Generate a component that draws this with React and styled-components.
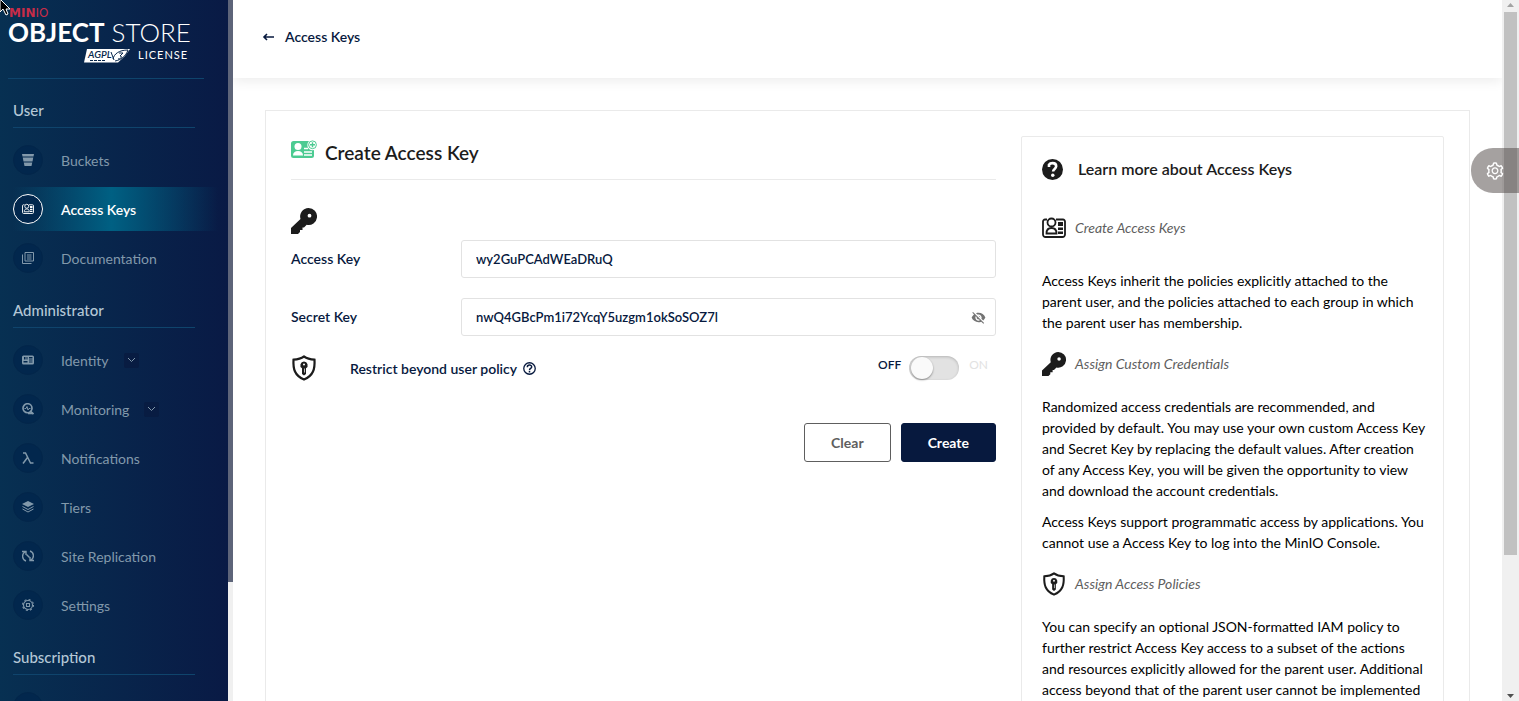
import React, { useState } from "react"
import styled, { createGlobalStyle, css } from "styled-components"
import { AiOutlineSetting } from "react-icons/ai"
import { MdVisibilityOff } from "react-icons/md"

const GlobalStyle = createGlobalStyle`
  * {
    box-sizing: border-box;
  }
  body {
    margin: 0;
    background: #fff;
    color: #07193e;
    font-family: Lato, "Open Sans", sans-serif;
    font-size: 14px;
  }
  button, input {
    font-family: inherit;
    font-size: 14px;
  }
  svg {
    display: block;
    flex: none;
  }
`

const Layout = styled.div`
  display: flex;
  height: 100vh;
  overflow: hidden;
`

/* ---------- sidebar ---------- */

const Sidebar = styled.aside`
  display: flex;
  flex: none;
  width: 233px;
`

const SidebarBody = styled.div`
  flex: 1;
  overflow: hidden;
  background: linear-gradient(90deg, #073052 0%, #091a45 100%);
`

const SidebarTrack = styled.div`
  width: 5px;
  background: #f0f0f0;
`

const SidebarThumb = styled.div`
  height: 83%;
  background: #5d6479;
`

const LogoBox = styled.div`
  height: 79px;
  margin: 0 24px 1px 8px;
  border-bottom: 1px solid #0f446c;
`

const SectionTitle = styled.h2`
  margin: 0 33px 10px 13px;
  padding: 20px 0 6px;
  border-bottom: 1px solid #0f446c;
  color: #b4c7d6;
  font-size: 15px;
  font-weight: 500;
  line-height: 21px;
`

const Menu = styled.ul`
  display: grid;
  gap: 5px;
  margin: 0;
  padding: 0 10px 0 13px;
  list-style: none;
`

const MenuLink = styled.a`
  display: flex;
  align-items: center;
  gap: 18px;
  height: 44px;
  color: #8299ab;
  text-decoration: none;
  ${props =>
    props.$active &&
    css`
      color: #fff;
      font-weight: 600;
      background: linear-gradient(90deg, transparent 0%, #006083 48%, transparent 100%);
    `}
`

const MenuIcon = styled.span`
  display: flex;
  align-items: center;
  justify-content: center;
  width: 30px;
  height: 30px;
  border: 1px solid ${props => (props.$active ? "#fff" : "#03264a")};
  border-radius: 50%;
  background: #02274d;
`

const MenuCaret = styled.span`
  display: flex;
  align-items: center;
  justify-content: center;
  width: 15px;
  height: 15px;
  margin-left: -3px;
  border-radius: 2px;
  background: #081c42;
`

/* ---------- page ---------- */

const Main = styled.main`
  flex: 1;
  min-width: 0;
  overflow: hidden;
`

const PageHeader = styled.header`
  display: flex;
  align-items: center;
  height: 78px;
  padding: 0 29px 5px;
  box-shadow: 0 3px 12px rgba(0, 0, 0, 0.08);
`

const BackLink = styled.a`
  display: flex;
  align-items: center;
  gap: 10px;
  color: #07193e;
  font-weight: 600;
  text-decoration: none;
`

const Card = styled.section`
  display: grid;
  grid-template-columns: 5fr 3fr;
  align-items: start;
  gap: 25px;
  margin: 32px;
  padding: 25px;
  border: 1px solid #eaeaea;
`

const KeyForm = styled.form`
  min-width: 0;
`

const FormTitle = styled.h1`
  display: flex;
  gap: 8px;
  height: 44px;
  margin: 0 0 28px;
  padding-top: 4px;
  border-bottom: 1px solid #eaeaea;
  color: #1c1c1c;
  font-size: 19px;
  font-weight: 600;
  line-height: 25px;
`

const Fields = styled.div`
  display: grid;
  gap: 20px;
  margin-top: 6px;
`

const Field = styled.div`
  display: flex;
  align-items: center;
`

const FieldLabel = styled.label`
  flex: none;
  width: 170px;
  padding-bottom: 2px;
  font-weight: 600;
`

const InputWrap = styled.div`
  display: flex;
  align-items: center;
  flex: 1;
  height: 38px;
  padding: 0 9px 0 14px;
  border: 1px solid #e2e2e2;
  border-radius: 3px;
`

const TextInput = styled.input`
  flex: 1;
  min-width: 0;
  padding: 0 0 1px;
  border: none;
  outline: none;
  background: none;
  color: #07193e;
  font-size: 13px;
  font-weight: 600;
`

const EyeButton = styled.button`
  padding: 0;
  border: none;
  background: none;
  color: #737373;
`

const SwitchRow = styled.div`
  display: flex;
  align-items: center;
  height: 26px;
  margin-top: 19px;
  padding-right: 8px;
`

const SwitchLabel = styled.label`
  display: flex;
  align-items: center;
  gap: 6px;
  margin: 0 auto 0 33px;
  font-weight: 600;
`

const SwitchState = styled.span`
  padding-bottom: 7px;
  color: ${props => (props.$on ? "#07193e" : "#e2e2e2")};
  font-size: 12px;
  font-weight: ${props => (props.$on ? 600 : 400)};
`

const Switch = styled.input`
  appearance: none;
  width: 50px;
  height: 24px;
  margin: 0 10px 0 8px;
  padding: 1px;
  border-radius: 12px;
  background: #e2e2e2;
  box-shadow: inset 0 1px 3px rgba(0, 0, 0, 0.2);

  &::before {
    content: "";
    display: block;
    width: 22px;
    height: 22px;
    margin-left: ${props => (props.checked ? 26 : 1)}px;
    border-radius: 50%;
    background: #fafafa;
    box-shadow: 0 1px 2px rgba(0, 0, 0, 0.4);
  }
`

const Actions = styled.div`
  display: flex;
  justify-content: flex-end;
  gap: 10px;
  margin-top: 42px;
`

const Button = styled.button`
  height: 39px;
  padding: 0 26px;
  border: 1px solid ${props => (props.$primary ? "#07193e" : "#5e5e5e")};
  border-radius: 3px;
  background: ${props => (props.$primary ? "#07193e" : "#fff")};
  color: ${props => (props.$primary ? "#fff" : "#5e5e5e")};
  font-weight: 700;
`

/* ---------- help box ---------- */

const HelpBox = styled.aside`
  min-width: 0;
  padding: 20px 14px 20px 20px;
  border: 1px solid #eaeaea;
  border-radius: 2px;
`

const HelpTitle = styled.h2`
  display: flex;
  gap: 15px;
  height: 24px;
  margin: 0 0 35px;
  padding-top: 2px;
  color: #1c1c1c;
  font-size: 16px;
  font-weight: 600;
  line-height: 20px;
`

const HelpHeading = styled.h3`
  display: flex;
  gap: 9px;
  height: 24px;
  margin: 19px 0 ${props => (props.$wide ? 30 : 20)}px;
  color: #5e5e5e;
  font-size: 14px;
  font-style: italic;
  font-weight: 400;
  line-height: 23px;
`

const HelpText = styled.p`
  margin: 0 0 10px;
  color: #000;
  font-size: 14px;
  line-height: 21px;
`

/* ---------- window furniture ---------- */

const ScrollBar = styled.div`
  display: flex;
  flex-direction: column;
  align-items: center;
  flex: none;
  width: 17px;
  padding: 3px 0 2px;
  background: #f0f0f0;
`

const ScrollThumb = styled.div`
  width: 13px;
  height: 78%;
  margin: 4px 0 auto;
  background: #c1c1c1;
`

const SettingsTab = styled.button`
  position: fixed;
  top: 148px;
  right: 0;
  display: flex;
  align-items: center;
  width: 48px;
  height: 45px;
  padding: 0 0 0 14px;
  border: none;
  border-radius: 22px 0 0 22px;
  background: rgba(83, 75, 73, 0.52);
  color: #fff;
`

const Pointer = styled.svg`
  position: fixed;
  top: 0;
  left: 0;
`

/* ---------- drawings ---------- */

const Logo = () => (
  <svg width="196" height="70" role="img" aria-label="MinIO Object Store, AGPLv3 license">
    <text x="1" y="17" fill="#c72c48" fontFamily="DejaVu Sans" fontSize="12">
      <tspan fontWeight="700">MIN</tspan>
      <tspan>IO</tspan>
    </text>
    <text x="0" y="42" fill="#fff" fontSize="26">
      <tspan fontWeight="700">OBJECT</tspan>
      <tspan fontWeight="300"> STORE</tspan>
    </text>
    <path d="M79 49h43l-5 7-7 6.500H76z" fill="#fff" />
    <text x="80" y="58" fill="#07264b" fontSize="10" fontStyle="italic" fontWeight="600">
      AGPL
    </text>
    <path d="M105 59c1-5 6-9 15-9-2 6-7 10-13 11M103 52l3 8" fill="none" stroke="#07264b" />
    <path d="M111 53h4l-3 3c3 0 1 3-2 3" fill="none" stroke="#07264b" />
    <path d="M82 60.500h16" stroke="#07264b" strokeDasharray="3 1" />
    <text x="130" y="59" fill="#fff" fontSize="11" letterSpacing="1">
      LICENSE
    </text>
  </svg>
)

const Icon = ({ size = 12, box = 24, children, ...rest }) => (
  <svg width={size} height={size} viewBox={`0 0 ${box} ${box}`} fill="currentColor" aria-hidden="true" {...rest}>
    {children}
  </svg>
)

const BucketsIcon = () => (
  <Icon>
    <path d="M0 0h24l-1 5H1zM1.500 7h21l-1.500 8H3zM3.500 17h17L19 24H5z" />
  </Icon>
)

const AccessKeysIcon = ({ size, color }) => (
  <Icon size={size} color={color}>
    <g fill="none" stroke="currentColor" strokeWidth="1.800">
      <path d="M5 3.500H3A2 2 0 0 0 1 5.500v13a2.500 2.500 0 0 0 2.500 2.500h17a2.500 2.500 0 0 0 2.500-2.500v-13a2 2 0 0 0-2-2h-7" />
      <circle cx="9.500" cy="6.500" r="4" />
      <path d="M4.500 17.500c0-4 2-5.500 5-5.500s5 1.500 5 5.500z" />
    </g>
    <path d="M16 6h5v4h-5zM16 11.500h5v2.500h-5zM16 15.500h5v2.500h-5z" />
  </Icon>
)

const DocumentationIcon = () => (
  <Icon fill="none" stroke="currentColor" strokeWidth="2">
    <path d="M6 1h17v17H6zM1 5v18h18M10 6h9M10 10h9M10 14h9" />
  </Icon>
)

const IdentityIcon = () => (
  <Icon>
    <path
      fillRule="evenodd"
      d="M3 3h18a3 3 0 0 1 3 3v12a3 3 0 0 1-3 3H3a3 3 0 0 1-3-3V6a3 3 0 0 1 3-3zm1 3v5h3V6zm5 0v5h2V6zM3 14v3h8v-3zM14 6v3h7V6zm0 5v2h7v-2zm0 4v2h7v-2z"
    />
  </Icon>
)

const MonitoringIcon = () => (
  <Icon fill="none" stroke="currentColor" strokeWidth="3.400">
    <circle cx="11" cy="10.500" r="9" />
    <path d="M16 16l7 6M12 21h11" />
    <path d="M5 11h3l2-4 2 7 2-3h3" strokeWidth="2" />
  </Icon>
)

const LambdaIcon = () => (
  <Icon fill="none" stroke="currentColor" strokeWidth="3">
    <path d="M2 2h5l10 20h6M11 11L2 23" />
  </Icon>
)

const TiersIcon = () => (
  <Icon>
    <path d="M12 0l12 6-12 6L0 6z" />
    <path d="M1 11l11 6 11-6M1 16l11 6 11-6" fill="none" stroke="currentColor" strokeWidth="2" />
  </Icon>
)

const ReplicationIcon = () => (
  <Icon fill="none" stroke="currentColor" strokeWidth="2.800">
    <path d="M8 22A10 10 0 0 1 6 4M0 3h8v7M16 2a10 10 0 0 1 2 18M24 21h-8v-7" />
    <path d="M9 9l6 6" />
  </Icon>
)

const SettingsIcon = () => (
  <Icon fill="none" stroke="currentColor" strokeWidth="2.200">
    <circle cx="12" cy="12" r="9" />
    <circle cx="12" cy="12" r="11" strokeDasharray="4 4.640" />
    <path d="M9 9h6v6H9z" />
  </Icon>
)

const KeyIcon = ({ size }) => (
  <Icon size={size} box={26} color="#1c1c1c">
    <path
      fillRule="evenodd"
      d="M17.500 0a8.500 8.500 0 1 1-1.800 16.800L13 19.500h-1.500V22H9v2l-2 2H0v-6l9.500-9A8.500 8.500 0 0 1 17.500 0zm1 5.800a1.900 1.900 0 1 0 0 3.800 1.900 1.900 0 0 0 0-3.800z"
    />
  </Icon>
)

const ShieldIcon = ({ size }) => (
  <Icon size={size} box={26} color="#1c1c1c">
    <path d="M13 1.500c3 2.200 7 3 10.500 3.200.5 9-1 16-10.500 19.800C3.500 20.700 2 13.700 2.500 4.700 6 4.500 10 3.700 13 1.500z" fill="none" stroke="currentColor" strokeWidth="2.200" />
    <path fillRule="evenodd" d="M13 6.500a3.700 3.700 0 0 1 2 6.800V19l-2 1.500-2-1.500v-5.700a3.700 3.700 0 0 1 2-6.800zm0 2a1 1 0 1 0 0 2 1 1 0 0 0 0-2z" />
    <path d="M13.500 13.500v4" stroke="#fff" strokeWidth=".7" />
  </Icon>
)

const CreateKeyIcon = () => (
  <svg width="26" height="20" viewBox="0 0 26 20" aria-hidden="true">
    <rect y="1" width="23" height="17" rx="2.500" fill="#4ccb92" />
    <g fill="#fff">
      <circle cx="7" cy="6.500" r="3.500" />
      <path d="M2 15.500c0-3 2-4.500 5-4.500s5 1.500 5 4.500z" />
      <circle cx="21.500" cy="5" r="5.200" />
    </g>
    <path d="M13 8.500h4M13 12h8M13 15h8" stroke="#fff" strokeWidth="1.600" />
    <circle cx="21.500" cy="4.800" r="3.900" fill="#fff" stroke="#4ccb92" />
    <path d="M21.500 2.300v5M19 4.800h5" stroke="#4ccb92" strokeWidth="1.400" />
  </svg>
)

const HelpFilledIcon = () => (
  <Icon size={21}>
    <circle cx="12" cy="12" r="12" />
    <path d="M8 9V6.500C9 5 10.500 4.700 12 4.700c2.500 0 4.200 1.300 4.200 3.600 0 3-3.500 3-3.500 6" fill="none" stroke="#fff" strokeWidth="3" />
    <circle cx="12.300" cy="18.500" r="2" fill="#fff" />
  </Icon>
)

const HelpOutlineIcon = () => (
  <Icon size={13} fill="none" stroke="currentColor" strokeWidth="2.400">
    <circle cx="12" cy="12" r="10.600" />
    <path d="M8 9.500c0-5 8-5 8-.5 0 3-4 2.500-4 6M12 16.500v3" strokeWidth="2.800" />
  </Icon>
)

const BackIcon = () => (
  <svg width="13" height="10" fill="none" stroke="currentColor" strokeWidth="1.600" aria-hidden="true">
    <path d="M12 5H2M5 2L2 5l3 3" />
  </svg>
)

const CaretIcon = () => (
  <svg width="9" height="6" fill="none" stroke="#8299ab" aria-hidden="true">
    <path d="M1 1l3.500 3.500L8 1" />
  </svg>
)

const sections = [
  {
    title: "User",
    items: [
      { label: "Buckets", icon: <BucketsIcon /> },
      { label: "Access Keys", icon: <AccessKeysIcon />, active: true },
      { label: "Documentation", icon: <DocumentationIcon /> },
    ],
  },
  {
    title: "Administrator",
    items: [
      { label: "Identity", icon: <IdentityIcon />, caret: true },
      { label: "Monitoring", icon: <MonitoringIcon />, caret: true },
      { label: "Notifications", icon: <LambdaIcon /> },
      { label: "Tiers", icon: <TiersIcon /> },
      { label: "Site Replication", icon: <ReplicationIcon /> },
      { label: "Settings", icon: <SettingsIcon /> },
    ],
  },
  {
    title: "Subscription",
    items: [{ label: "License", icon: <DocumentationIcon /> }],
  },
]

const Nav = () => (
  <nav>
    {sections.map(section => (
      <React.Fragment key={section.title}>
        <SectionTitle>{section.title}</SectionTitle>
        <Menu>
          {section.items.map(item => (
            <li key={item.label}>
              <MenuLink href="#" $active={item.active}>
                <MenuIcon $active={item.active}>{item.icon}</MenuIcon>
                {item.label}
                {item.caret && (
                  <MenuCaret>
                    <CaretIcon />
                  </MenuCaret>
                )}
              </MenuLink>
            </li>
          ))}
        </Menu>
      </React.Fragment>
    ))}
  </nav>
)

const CreateForm = () => {
  const [accessKey, setAccessKey] = useState("wy2GuPCAdWEaDRuQ")
  const [secretKey, setSecretKey] = useState("nwQ4GBcPm1i72YcqY5uzgm1okSoSOZ7l")
  const [restrict, setRestrict] = useState(false)

  const clear = () => {
    setAccessKey("")
    setSecretKey("")
    setRestrict(false)
  }

  return (
    <KeyForm onSubmit={e => e.preventDefault()}>
      <FormTitle>
        <CreateKeyIcon />
        Create Access Key
      </FormTitle>
      <KeyIcon size={26} />
      <Fields>
        <Field>
          <FieldLabel htmlFor="access-key">Access Key</FieldLabel>
          <InputWrap>
            <TextInput id="access-key" type="text" value={accessKey} onChange={e => setAccessKey(e.target.value)} />
          </InputWrap>
        </Field>
        <Field>
          <FieldLabel htmlFor="secret-key">Secret Key</FieldLabel>
          <InputWrap>
            <TextInput id="secret-key" type="text" value={secretKey} onChange={e => setSecretKey(e.target.value)} />
            <EyeButton type="button" aria-label="Hide secret key">
              <MdVisibilityOff size={15} />
            </EyeButton>
          </InputWrap>
        </Field>
      </Fields>
      <SwitchRow>
        <ShieldIcon size={26} />
        <SwitchLabel htmlFor="restrict">
          Restrict beyond user policy
          <HelpOutlineIcon />
        </SwitchLabel>
        <SwitchState $on={!restrict}>OFF</SwitchState>
        <Switch id="restrict" type="checkbox" checked={restrict} onChange={e => setRestrict(e.target.checked)} />
        <SwitchState $on={restrict}>ON</SwitchState>
      </SwitchRow>
      <Actions>
        <Button type="button" onClick={clear}>
          Clear
        </Button>
        <Button type="submit" $primary>
          Create
        </Button>
      </Actions>
    </KeyForm>
  )
}

const Help = () => (
  <HelpBox>
    <HelpTitle>
      <HelpFilledIcon />
      Learn more about Access Keys
    </HelpTitle>
    <HelpHeading $wide>
      <AccessKeysIcon size={24} color="#1c1c1c" />
      Create Access Keys
    </HelpHeading>
    <HelpText>
      Access Keys inherit the policies explicitly attached to the parent user, and the policies attached to each group
      in which the parent user has membership.
    </HelpText>
    <HelpHeading>
      <KeyIcon size={24} />
      Assign Custom Credentials
    </HelpHeading>
    <HelpText>
      Randomized access credentials are recommended, and provided by default. You may use your own custom Access Key and
      Secret Key by replacing the default values. After creation of any Access Key, you will be given the opportunity to
      view and download the account credentials.
    </HelpText>
    <HelpText>
      Access Keys support programmatic access by applications. You cannot use a Access Key to log into the MinIO
      Console.
    </HelpText>
    <HelpHeading>
      <ShieldIcon size={24} />
      Assign Access Policies
    </HelpHeading>
    <HelpText>
      You can specify an optional JSON-formatted IAM policy to further restrict Access Key access to a subset of the
      actions and resources explicitly allowed for the parent user. Additional access beyond that of the parent user
      cannot be implemented through these policies.
    </HelpText>
  </HelpBox>
)

const App = () => (
  <>
    <GlobalStyle />
    <Layout>
      <Sidebar>
        <SidebarBody>
          <LogoBox>
            <Logo />
          </LogoBox>
          <Nav />
        </SidebarBody>
        <SidebarTrack>
          <SidebarThumb />
        </SidebarTrack>
      </Sidebar>
      <Main>
        <PageHeader>
          <BackLink href="#">
            <BackIcon />
            Access Keys
          </BackLink>
        </PageHeader>
        <Card>
          <CreateForm />
          <Help />
        </Card>
      </Main>
      <ScrollBar>
        <svg width="7" height="5" fill="#a3a3a3" aria-hidden="true">
          <path d="M0 4l3.500-4L7 4z" />
        </svg>
        <ScrollThumb />
        <svg width="7" height="5" fill="#505050" aria-hidden="true">
          <path d="M0 0l3.500 4L7 0z" />
        </svg>
      </ScrollBar>
    </Layout>
    <SettingsTab type="button" aria-label="Settings">
      <AiOutlineSetting size={20} />
    </SettingsTab>
    <Pointer width="12" height="17" aria-hidden="true">
      <path d="M0-1v13l3-3 3 6 2-1-2-5h4z" fill="#000" stroke="#fff" />
    </Pointer>
  </>
)

export default App
